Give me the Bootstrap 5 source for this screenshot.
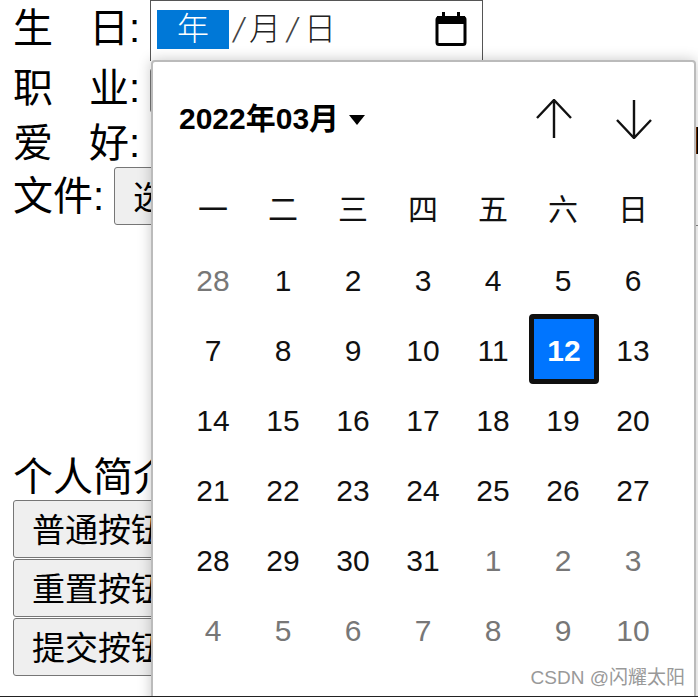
<!DOCTYPE html>
<html lang="zh">
<head>
<meta charset="utf-8">
<title>表单</title>
<link href="https://cdn.jsdelivr.net/npm/bootstrap@5.3.0/dist/css/bootstrap.min.css" rel="stylesheet">
<style>
html,body{margin:0;background:#fff;color:#000;overflow:hidden}
body{font-family:"Liberation Sans","Noto Sans CJK SC",sans-serif}
.stage{position:relative;width:698px;height:697px;overflow:hidden;border-bottom:1px solid #222;font-size:40px;line-height:1.2}
.fields{padding-left:13px}
.frow{display:flex;align-items:center;white-space:nowrap}
.frow1{height:62px;align-items:flex-start}
.frow1 .lbl{padding-top:4px}
.frow2{height:52px}
.frow3{height:53px;align-items:flex-end}
.frow4{height:58px}
.lbl{width:137px;flex:none}
.lbl-s{width:101px;flex:none}
.lblgap{display:inline-block;width:36px}
.datebox{width:333px;height:61px;border:1px solid #555;border-bottom:0;display:flex;align-items:center;padding:0 15px 4px 6px;font-size:32px;color:#222;font-weight:300}
.seg{display:block}
.seg-on{width:72px;height:39px;line-height:39px;background:#0078d7;color:#fff;text-align:center}
.seg-sep{text-align:center;color:#444;font-size:38px;line-height:1;font-family:"Liberation Serif",serif;transform:skewX(-8deg)}
.sep-a{width:20px}
.sep-b{width:23px}
.calico{margin-left:auto;display:block}
.selbox{width:20px;height:45px;margin-top:4px;border:1px solid #767676;border-radius:3px 0 0 3px;background:#fff}
.formbtn{display:block;background:#efefef;border:1px solid #767676;border-radius:3px;color:#000;font-size:33px;line-height:1.2;padding:4px 18px 0;text-align:left;white-space:nowrap}
.filebtn{height:58px;width:300px}
.btn-stack{display:flex;flex-direction:column;gap:1px;padding-left:13px}
.btn-stack .formbtn{width:300px;height:58px}
.intro{margin-top:229px;height:46px;line-height:46px;padding-left:13px;white-space:nowrap}
.spill{position:absolute;left:693px;top:119px}
.tick{position:absolute;left:696px;top:225px;width:2px;height:1px;background:#888}
.cal{position:absolute;left:151px;top:60px;width:545px;height:660px;background:#fff;border:2px solid #bbb;border-radius:4px;box-shadow:0 0 14px rgba(0,0,0,.22);padding:0 0 0 26px}
.cal-head{display:flex;align-items:center;height:113px;padding-right:42px}
.cal-title{font-size:30px;font-weight:700;line-height:1;white-space:nowrap}
.caret{width:0;height:0;border-left:8px solid transparent;border-right:8px solid transparent;border-top:10px solid #000;margin-left:10px;margin-top:2px}
.arrows{margin-left:auto;display:flex;gap:44px}
.arrows svg{display:block}
.cal-grid{display:grid;grid-template-columns:repeat(7,70px);grid-template-rows:71px repeat(6,70px);margin-left:-1px}
.wk,.dy{display:flex;align-items:center;justify-content:center;font-size:30px;line-height:1;color:#111}
.wk{padding-bottom:1px}
.dy-out{color:#777}
.dy-on{color:#fff;font-weight:700;background:#0075ff;border:5px solid #101010;border-radius:4px;margin:-2px -1px 2px 1px;padding-top:4px}
.mark-csdn{position:absolute;right:13px;bottom:6px;font-size:19px;line-height:1.2;color:#999;white-space:nowrap}
</style>
</head>
<body>
<div class="stage">
  <form class="fields" onsubmit="return false">
    <div class="frow frow1"><span class="lbl">生<span class="lblgap"></span>日:</span>
      <div class="datebox"><span class="seg seg-on">年</span><span class="seg seg-sep sep-a">/</span><span class="seg">月</span><span class="seg seg-sep sep-b">/</span><span class="seg">日</span>
        <svg class="calico" width="32" height="36" viewBox="0 0 32 36"><path d="M2 8.5a2 2 0 0 1 2-2h24a2 2 0 0 1 2 2v23a2 2 0 0 1-2 2H4a2 2 0 0 1-2-2z" fill="none" stroke="#000" stroke-width="3"/><rect x="2" y="5" width="28" height="8" fill="#000"/><rect x="7" y="1" width="3" height="6" fill="#000"/><rect x="22" y="1" width="3" height="6" fill="#000"/></svg>
      </div>
    </div>
    <div class="frow frow2"><span class="lbl">职<span class="lblgap"></span>业:</span><div class="selbox"></div></div>
    <div class="frow frow3"><span class="lbl">爱<span class="lblgap"></span>好:</span></div>
    <div class="frow frow4"><span class="lbl-s">文件:</span><button type="button" class="formbtn filebtn">选择文件</button></div>
  </form>
  <div class="intro">个人简介</div>
  <div class="btn-stack">
    <button type="button" class="formbtn">普通按钮</button>
    <button type="button" class="formbtn">重置按钮</button>
    <button type="button" class="formbtn">提交按钮</button>
  </div>
  <div class="spill">唱</div>
  <div class="tick"></div>
  <div class="cal">
    <div class="cal-head">
      <span class="cal-title">2022年03月</span><span class="caret"></span>
      <div class="arrows">
        <svg width="36" height="40" viewBox="0 0 36 40"><path d="M18 39V1M1 19 18 1l17 18" fill="none" stroke="#111" stroke-width="2.4"/></svg>
        <svg width="36" height="40" viewBox="0 0 36 40"><path d="M18 1v38M1 21l17 18 17-18" fill="none" stroke="#111" stroke-width="2.4"/></svg>
      </div>
    </div>
    <div class="cal-grid">
      <div class="wk">一</div><div class="wk">二</div><div class="wk">三</div><div class="wk">四</div><div class="wk">五</div><div class="wk">六</div><div class="wk">日</div>
      <div class="dy dy-out">28</div><div class="dy">1</div><div class="dy">2</div><div class="dy">3</div><div class="dy">4</div><div class="dy">5</div><div class="dy">6</div>
      <div class="dy">7</div><div class="dy">8</div><div class="dy">9</div><div class="dy">10</div><div class="dy">11</div><div class="dy dy-on">12</div><div class="dy">13</div>
      <div class="dy">14</div><div class="dy">15</div><div class="dy">16</div><div class="dy">17</div><div class="dy">18</div><div class="dy">19</div><div class="dy">20</div>
      <div class="dy">21</div><div class="dy">22</div><div class="dy">23</div><div class="dy">24</div><div class="dy">25</div><div class="dy">26</div><div class="dy">27</div>
      <div class="dy">28</div><div class="dy">29</div><div class="dy">30</div><div class="dy">31</div><div class="dy dy-out">1</div><div class="dy dy-out">2</div><div class="dy dy-out">3</div>
      <div class="dy dy-out">4</div><div class="dy dy-out">5</div><div class="dy dy-out">6</div><div class="dy dy-out">7</div><div class="dy dy-out">8</div><div class="dy dy-out">9</div><div class="dy dy-out">10</div>
    </div>
  </div>
  <div class="mark-csdn">CSDN @闪耀太阳</div>
</div>
<script src="https://cdn.jsdelivr.net/npm/bootstrap@5.3.0/dist/js/bootstrap.bundle.min.js"></script>
</body>
</html>
